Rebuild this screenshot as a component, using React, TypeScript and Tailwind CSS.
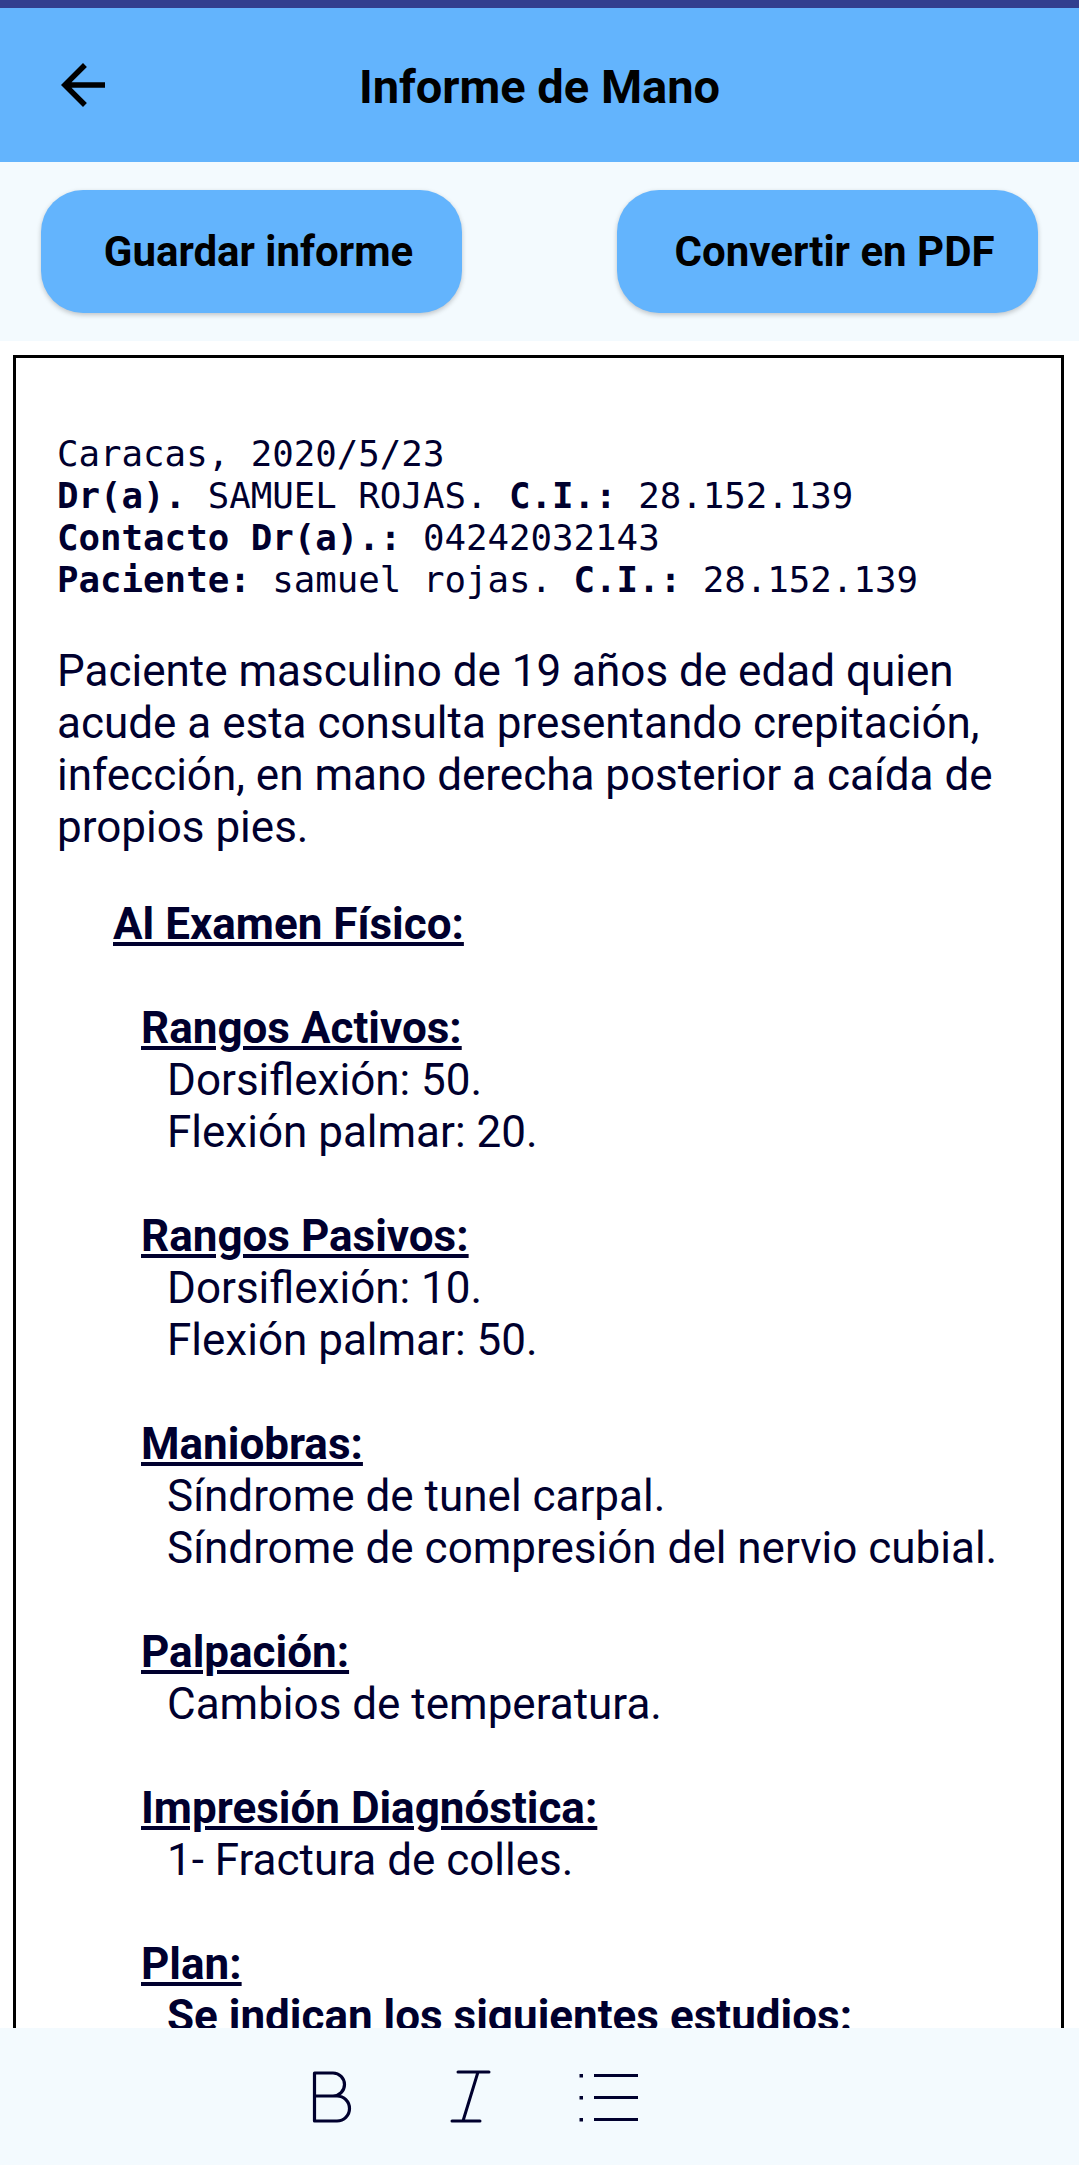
import React from "react";

const ink = "text-[#00002e]";

function Heading({ children, indent }: { children: React.ReactNode; indent: string }) {
  return (
    <div className={`${indent} font-bold`}>
      <span className="underline decoration-[4px] underline-offset-[3px]">{children}</span>
    </div>
  );
}

function Blank() {
  return <div className="h-[52px]" />;
}

export default function App() {
  return (
    <div className="w-[1079px] h-[2165px] flex flex-col overflow-hidden bg-white font-['Roboto',sans-serif]">
      <div className="h-[8px] bg-[#323f8f] shrink-0" />
      <div className="h-[154px] shrink-0 bg-[#63b4fd] grid grid-cols-[154px_1fr_154px] items-center">
        <div className="flex items-center">
          <svg className="ml-[50px]" width="66" height="66" viewBox="0 0 24 24" fill="#000">
            <path d="M20 11H7.83l5.59-5.59L12 4l-8 8 8 8 1.41-1.41L7.83 13H20v-2z" />
          </svg>
        </div>
        <div className="text-center text-black text-[47px] font-bold leading-none pt-[2px]">Informe de Mano</div>
        <div />
      </div>
      <div className="shrink-0 bg-[#f3fafe] py-[28px] px-[41px] flex justify-between">
        <button className="w-[421px] h-[123px] rounded-[42px] bg-[#63b4fd] shadow-[0_2px_5px_rgba(0,0,0,0.22)] flex items-center justify-center pl-[14px] text-[42px] font-bold text-black leading-none">
          Guardar informe
        </button>
        <button className="w-[421px] h-[123px] rounded-[42px] bg-[#63b4fd] shadow-[0_2px_5px_rgba(0,0,0,0.22)] flex items-center justify-center pl-[14px] text-[42px] font-bold text-black leading-none">
          Convertir en PDF
        </button>
      </div>
      <div className="flex-1 overflow-hidden pt-[14px]">
        <div className={`ml-[13px] w-[1051px] border-[3px] border-black h-[2000px] pt-[75px] pl-[41px] pr-[40px] ${ink}`}>
          <div className="font-['DejaVu_Sans_Mono',monospace] text-[35.75px] leading-[42px] whitespace-pre">
            <div>Caracas, 2020/5/23</div>
            <div>
              <b>Dr(a).</b> SAMUEL ROJAS. <b>C.I.:</b> 28.152.139
            </div>
            <div>
              <b>Contacto Dr(a).:</b> 04242032143
            </div>
            <div>
              <b>Paciente:</b> samuel rojas. <b>C.I.:</b> 28.152.139
            </div>
          </div>
          <div className="mt-[44px] text-[44px] leading-[52px] whitespace-nowrap">
            Paciente masculino de 19 años de edad quien
            <br />
            acude a esta consulta presentando crepitación,
            <br />
            infección, en mano derecha posterior a caída de
            <br />
            propios pies.
          </div>
          <div className="mt-[45px] text-[44px] leading-[52px] whitespace-nowrap">
            <Heading indent="pl-[56px]">Al Examen Físico:</Heading>
            <Blank />
            <Heading indent="pl-[84px]">Rangos Activos:</Heading>
            <div className="pl-[110px]">Dorsiflexión: 50.</div>
            <div className="pl-[110px]">Flexión palmar: 20.</div>
            <Blank />
            <Heading indent="pl-[84px]">Rangos Pasivos:</Heading>
            <div className="pl-[110px]">Dorsiflexión: 10.</div>
            <div className="pl-[110px]">Flexión palmar: 50.</div>
            <Blank />
            <Heading indent="pl-[84px]">Maniobras:</Heading>
            <div className="pl-[110px]">Síndrome de tunel carpal.</div>
            <div className="pl-[110px]">Síndrome de compresión del nervio cubial.</div>
            <Blank />
            <Heading indent="pl-[84px]">Palpación:</Heading>
            <div className="pl-[110px]">Cambios de temperatura.</div>
            <Blank />
            <Heading indent="pl-[84px]">Impresión Diagnóstica:</Heading>
            <div className="pl-[110px]">1- Fractura de colles.</div>
            <Blank />
            <Heading indent="pl-[84px]">Plan:</Heading>
            <div className="pl-[110px] font-bold">Se indican los siguientes estudios:</div>
          </div>
        </div>
      </div>
      <div className="h-[137px] shrink-0 bg-[#f3fafe] flex items-center pl-[263px]">
        <div className="w-[138px] flex justify-center">
          <svg width="40" height="52" viewBox="0 0 40 52" fill="none" stroke="#00002e" strokeWidth="3.2" strokeLinejoin="round">
            <path d="M2.5 2 H21 A11.5 11.5 0 0 1 21 25 H2.5 Z M2.5 25 H25 A12.5 12.5 0 0 1 25 50 H2.5 Z" />
          </svg>
        </div>
        <div className="w-[138px] flex justify-center">
          <svg width="41" height="55" viewBox="0 0 41 55" fill="none" stroke="#00002e" strokeWidth="3" strokeLinecap="round">
            <path d="M8 3 H39 M2 52 H30 M28 3 L13 52" />
          </svg>
        </div>
        <div className="w-[138px] flex justify-center">
          <svg width="63" height="52" viewBox="0 0 63 52" fill="none">
            <rect x="2.5" y="3" width="3.5" height="3.5" fill="#00002e" />
            <rect x="2.5" y="25" width="3.5" height="3.5" fill="#00002e" />
            <rect x="2.5" y="47" width="3.5" height="3.5" fill="#00002e" />
            <path d="M17 4.5 H61 M17 26.5 H61 M17 48.5 H61" stroke="#00002e" strokeWidth="3.2" />
          </svg>
        </div>
      </div>
    </div>
  );
}
